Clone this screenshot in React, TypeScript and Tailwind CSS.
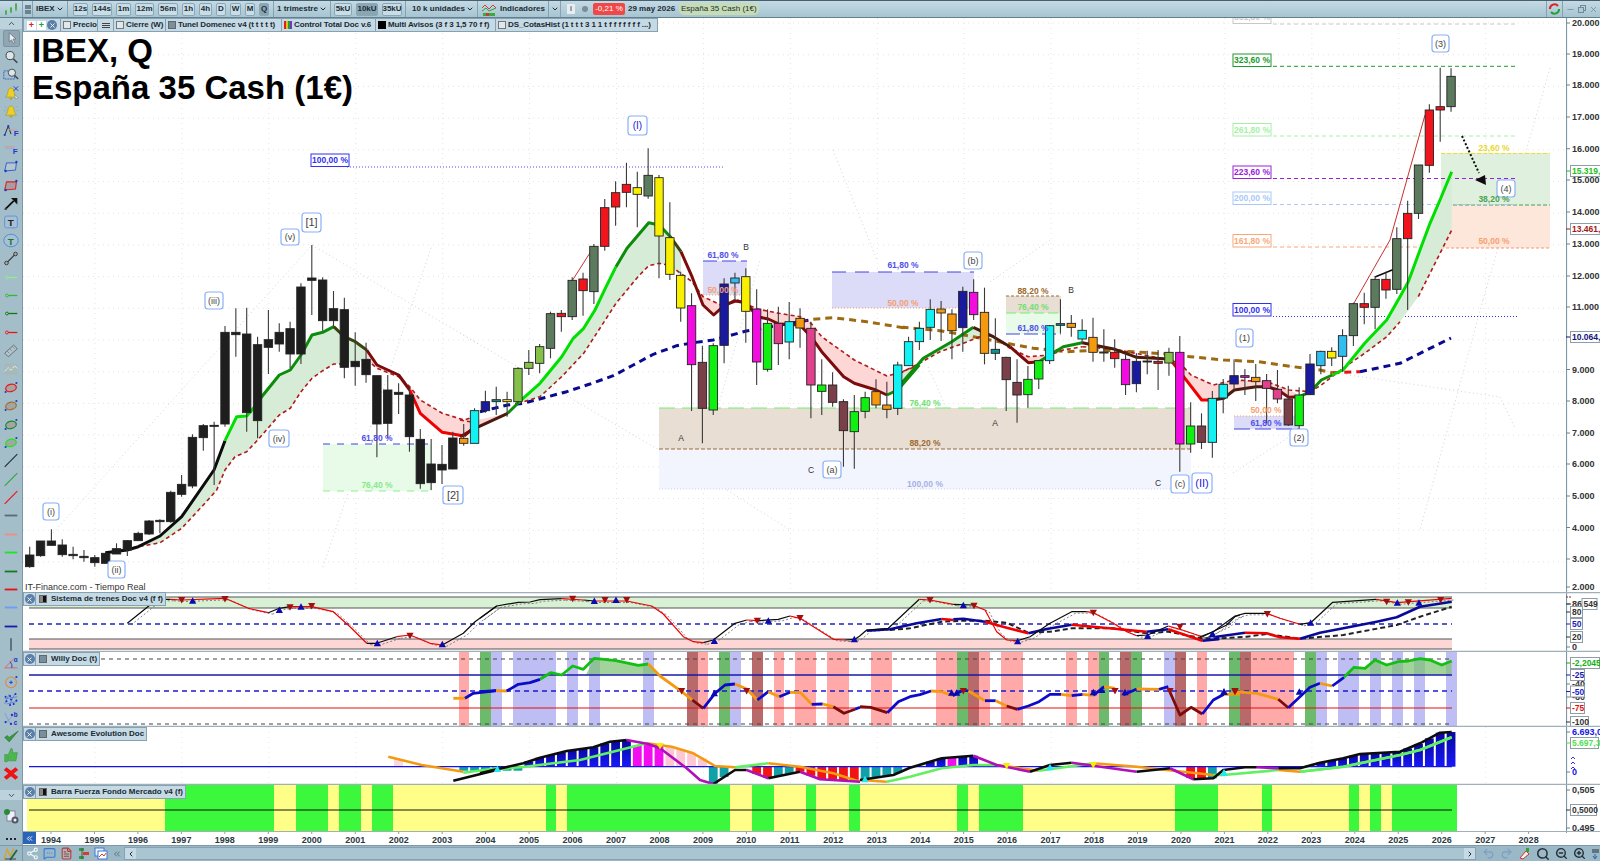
import React from "react";
import { Share2, MessageSquareMore, FileText, Undo2, Redo2, ZoomIn, ZoomOut, Search, ChevronDown, ChevronUp, ChevronLeft, ChevronRight, ChevronsLeft, Minus, X } from "lucide-react";

type Pt = number[];
const Z3 = [1200, 0], Z4 = [0, 580], Z5 = [1200, 580], Z8 = [20, 200], Z9 = [460, 120], Z10 = [900, 240], Z11 = [480, 590], Z12 = [860, 590];
const R = (o: number[], a: number[]): Pt[] => {
  const r: Pt[] = [];
  for (let i = 0; i < a.length; i += 2) r.push([o[0] + a[i] / 3, o[1] + a[i + 1] / 3]);
  return r;
};
const S = (p: Pt[]) => p.map((q) => q[0].toFixed(1) + "," + q[1].toFixed(1)).join(" ");
const L = ({ p, c, w = 1, d }: { p: Pt[]; c: string; w?: number; d?: string }) => (
  <polyline points={S(p)} fill="none" stroke={c} strokeWidth={w} strokeDasharray={d} strokeLinejoin="round" />
);
const Band = ({ a, b, c }: { a: Pt[]; b: Pt[]; c: string }) => <polygon points={S([...a, ...b])} fill={c} />;

const COL: Record<string, string> = {
  k: "#1e1e1e", G: "#5c7a5e", r: "#f2141c", y: "#f8f000", c: "#12f2f2", b: "#1a1a9e", m: "#f20ce0", B: "#7a3f48",
  g: "#10f010", o: "#f5990f", p: "#e0408c", l: "#84c04a", s: "#30bdf0", t: "#109090",
};
type C = [string, number, number, number, number];
const c8: C[] = [
  ["k",1065,1100,1040,1103],["k",1023,1067,1023,1070],["k",1023,1036,988,1036],["k",1035,1064,1018,1070],["k",1063,1067,1040,1078],
  ["k",1069,1073,1050,1085],["k",1073,1088,1065,1100],["k",1060,1090,1058,1090],["k",1046,1062,1030,1062],["k",1022,1050,1020,1068],
  ["k",1000,1022,995,1022],["k",963,1002,960,1005],["k",961,965,958,1000],["k",877,965,872,968],["k",853,883,825,890],
  ["k",712,858,703,865],["k",677,713,672,752],["k",676,679,665,855],["k",397,672,378,680],["k",397,404,325,470],
  ["k",402,638,323,695],["k",434,662,410,715],["k",419,442,330,522],["k",397,432,370,455],["k",386,462,365,505],
  ["k",261,462,250,492],["k",234,241,135,345],["k",240,362,232,392],["k",326,362,273,380],["k",329,502,293,535],
  ["k",484,500,397,557],["k",478,524,428,548],["k",527,672,527,772],["k",570,670,525,715],["k",577,583,550,642],
  ["k",585,710,563,755],["k",718,851,687,866],["k",792,848,717,870],["k",793,810,735,852],["k",714,807,695,808],
];
const c9: C[] = [
  ["o",955,970,912,977],["c",872,970,865,970],["b",845,872,812,878],["t",839,845,800,885],["y",839,845,815,890],
  ["l",745,845,742,850],["l",727,745,690,765],["l",680,730,672,760],["G",581,685,575,715],["r",580,590,570,635],
  ["G",481,590,472,600],["r",477,512,458,587],["G",379,515,372,552],["r",263,379,237,392],["r",218,261,184,317],
  ["r",193,217,128,262],["y",203,223,155,322],["G",166,228,85,236],["y",173,348,165,475],["y",353,463,247,480],
  ["y",466,564,455,605],["m",557,734,520,873],["B",727,865,677,970],["g",677,870,670,885],["b",492,676,475,730],
  ["s",474,489,458,540],["y",470,574,445,668],["m",567,726,508,795],["g",610,748,568,755],["p",610,671,560,735],
  ["c",605,666,546,718],["o",595,624,565,683],["p",625,795,605,895],["g",795,814,718,885],["B",795,847,757,860],
  ["B",845,932,838,1040],["g",875,935,825,1046],["g",833,874,815,895],["o",815,855,778,865],["o",855,868,785,895],
  ["c",735,865,725,885],["c",665,737,650,737],["c",625,665,605,690],
];
const c10: C[] = [
  ["c",208,262,178,300],["o",207,219,183,303],["o",222,272,208,358],["b",154,263,140,335],["m",157,224,118,240],
  ["o",217,340,143,373],["t",328,340,235,360],["B",352,419,350,513],["B",427,465,358,548],["g",418,464,378,503],
  ["g",362,417,362,447],["c",257,362,255,372],["t",251,256,178,280],["o",250,262,225,290],["c",271,297,238,310],
  ["o",292,337,233,365],["o",336,339,268,365],["r",337,356,298,383],["m",358,434,340,465],["b",364,431,340,457],
  ["k",363,365,332,403],["r",364,370,330,450],["l",337,369,323,407],["m",337,612,288,695],["g",558,612,487,638],
  ["B",558,607,520,627],["c",475,607,453,653],["c",433,474,417,520],["b",407,432,358,450],["m",407,412,387,465],
  ["o",412,425,372,483],["p",422,445,402,550],["p",448,477,390,490],["B",477,555,437,558],["g",465,557,442,570],
  ["b",372,464,342,465],["s",334,377,332,403],["y",334,354,322,378],["s",287,349,268,395],["G",191,287,188,318],
  ["r",191,202,158,253],["G",118,202,108,268],["r",118,150,95,176],
];
const c3: C[] = [
  ["G",716,868,682,882],["r",640,716,602,930],["G",495,640,495,657],["r",330,496,313,518],["r",320,330,203,425],["G",229,320,205,335],
];
const cx = (i: number) => 29.7 + 10.85 * i;
const candles = [
  ...c8.map((c) => ({ k: c[0], t: 200 + c[1] / 3, b: 200 + c[2] / 3, h: 200 + c[3] / 3, l: 200 + c[4] / 3 })),
  ...c9.map((c) => ({ k: c[0], t: 120 + c[1] / 3, b: 120 + c[2] / 3, h: 120 + c[3] / 3, l: 120 + c[4] / 3 })),
  ...c10.map((c) => ({ k: c[0], t: 240 + c[1] / 3, b: 240 + c[2] / 3, h: 240 + c[3] / 3, l: 240 + c[4] / 3 })),
  ...c3.map((c) => ({ k: c[0], t: c[1] / 3, b: c[2] / 3, h: c[3] / 3, l: c[4] / 3 })),
];

const BLK = "#0c0c0c", LIM = "#00e000", GRN = "#0b8c0b", OLV = "#3c4212", DRD = "#7c0c0c", RED = "#f00000", DBR = "#4c1a0c";
const thick: [string, Pt[]][] = [
  [BLK, R(Z8, [256,1058,322,1050,355,1040,420,1008,485,950,582,810,615,722])],
  [LIM, R(Z8, [615,722,650,650,680,648,713,610])],
  [GRN, R(Z8, [713,610,725,590,778,525,811,510,843,465,876,405,908,397,941,380])],
  [OLV, R(Z8, [941,380,973,410,1006,425,1040,450])],
  [DRD, R(Z8, [1040,450,1071,495,1136,525,1169,570])],
  [RED, R(Z8, [1169,570,1201,640,1267,697,1332,708])],
  [DRD, R(Z8, [1332,708,1365,680])],
  [DRD, R(Z9, [0,950,45,925])],
  [DBR, R(Z9, [45,925,143,880])],
  [GRN, R(Z9, [143,880,175,848])],
  [LIM, R(Z9, [175,848,240,790,305,710,340,655,371,625,405,570,436,505,468,440])],
  [GRN, R(Z9, [468,440,501,385,566,308,598,315,631,350])],
  [OLV, R(Z9, [631,350,663,395])],
  [DRD, R(Z9, [663,395,696,470,729,555,761,585,794,555,826,543,859,548,892,590,925,597,957,612,1020,615,1053,650,1085,695,1118,733,1151,770,1183,790,1248,810,1281,825])],
  [GRN, R(Z9, [1281,825,1313,810,1378,735])],
  [GRN, R(Z10, [0,435,70,355,155,305,220,262])],
  [DBR, R(Z10, [220,262,280,290,330,320])],
  [DRD, R(Z10, [330,320,385,368,417,365])],
  [GRN, R(Z10, [417,365,449,345,490,320,547,308])],
  [DBR, R(Z10, [547,308,580,315,645,328,710,352,808,357])],
  [RED, R(Z10, [808,357,820,370,905,480,938,480])],
  [DBR, R(Z10, [938,480,971,475,1003,450,1069,440,1101,440])],
  [DRD, R(Z10, [1101,440,1134,450,1166,472,1199,470])],
  [GRN, R(Z10, [1199,470,1231,455,1264,420,1297,405])],
  [LIM, [...R(Z10, [1297,405,1329,390,1394,310,1460,240,1500,170]), ...R(Z3, [625,845,660,750,690,670,720,600,755,515])]],
];
const dashed: Pt[][] = [
  R(Z8, [256,1060,355,1040,420,1028,485,985,550,915,590,870,615,810,645,770,680,755,713,720,778,645,811,625,843,575,876,535,908,512,941,492,973,492]),
  R(Z8, [1040,478,1071,505,1136,530,1169,560,1201,600,1267,640,1332,660,1365,650]),
  R(Z9, [0,900,30,905]),
  R(Z9, [143,880,175,850,240,830,305,770,371,700,436,600,468,550,534,470,566,437,598,430,631,437,696,485,729,530,794,560,826,537,892,567,957,580,1020,590,1053,610,1085,650,1183,720,1281,768,1313,760,1378,735]),
  R(Z10, [0,400,58,370,120,335,190,310,253,285,280,290,330,325,385,350,449,345,490,330,547,320]),
  R(Z10, [547,320,645,328,808,360,840,370,873,405,940,435,1003,420,1101,425,1166,450,1231,455,1264,435,1329,385,1394,340,1460,290,1500,245]),
  R(Z3, [655,890,700,800,755,690]),
];
const greenFill = "#d7ecd7", pinkFill = "#fdd6d6";

const gridY = Array.from({ length: 18 }, (_, i) => 23 + i * 31.7);
const gridX = Array.from({ length: 18 }, (_, i) => 95 + i * 86.92);

const diag: number[][] = [
  [53,533,312,245],[312,245,480,345],[460,333,727,490],[323,567,432,245],[833,150,877,260],[1550,68,1483,300],[1483,300,1420,530],
  [1267,363,1500,397],[1500,397,1515,428],[928,367,973,467],[990,282,1050,240],[1233,473,1300,430],[727,490,790,530],[700,470,760,260],
];

const FF = "'Liberation Sans', Arial, sans-serif";

const Wave = ({ a, t, c = "#444", s = 9 }: { a: number[]; t: string; c?: string; s?: number }) => (
  <g>
    <rect x={a[0]} y={a[2]} width={a[1] - a[0]} height={a[3] - a[2]} rx={3} fill="#fff" stroke="#8ab0f8" strokeWidth={1.2} />
    <text x={(a[0] + a[1]) / 2} y={(a[2] + a[3]) / 2 + s * 0.36} textAnchor="middle" fontSize={s} fill={c} fontFamily={FF}>{t}</text>
  </g>
);
const FBox = ({ y, t, c, x = 1233 }: { y: number; t: string; c: string; x?: number }) => (
  <g>
    <rect x={x} y={y} width={38} height={12.5} fill="#fff" stroke={c} strokeWidth={1} />
    <text x={x + 19} y={y + 9.3} textAnchor="middle" fontSize={8.5} fontWeight={700} fill={c} fontFamily={FF}>{t}</text>
  </g>
);
const Pct = ({ x, y, t, c }: { x: number; y: number; t: string; c: string }) => (
  <text x={x} y={y + 3} textAnchor="middle" fontSize={8.5} fontWeight={700} fill={c} fontFamily={FF}>{t}</text>
);
const Ltr = ({ x, y, t }: { x: number; y: number; t: string }) => (
  <text x={x} y={y + 3} textAnchor="middle" fontSize={8.5} fill="#333" fontFamily={FF}>{t}</text>
);
const Tri = ({ x, y, c, up }: { x: number; y: number; c: string; up?: boolean }) => (
  <polygon points={up ? `${x - 3.6},${y + 3} ${x + 3.6},${y + 3} ${x},${y - 3.5}` : `${x - 3.6},${y - 3} ${x + 3.6},${y - 3} ${x},${y + 3.5}`} fill={c} />
);
const Tris = ({ o, a, c, up }: { o: number[]; a: number[]; c: string; up?: boolean }) => (
  <>{R(o, a).map((p, i) => <Tri key={i} x={p[0]} y={p[1]} c={c} up={up} />)}</>
);

const AxT = ({ y, t, c = "#333" }: { y: number; t: string; c?: string }) => (
  <g>
    <line x1={1566} x2={1570} y1={y} y2={y} stroke="#6a8494" />
    <text x={1572} y={y + 3.2} fontSize={9} fontWeight={700} fill={c} fontFamily={FF}>{t}</text>
  </g>
);
const AxB = ({ y, t, c = "#333", w = 32, x = 1570.5 }: { y: number; t: string; c?: string; w?: number; x?: number }) => (
  <g>
    <line x1={1566} x2={1571} y1={y} y2={y} stroke={c} />
    <rect x={x} y={y - 5.5} width={w} height={11} fill="#fff" stroke="#8d9ea8" />
    <text x={x + 1.5} y={y + 3.2} fontSize={8.5} fontWeight={700} fill={c} fontFamily={FF}>{t}</text>
  </g>
);

function PanelSvgs({ top, h, plot, axis }: { top: number; h: number; plot: React.ReactNode; axis: React.ReactNode }) {
  return (
    <>
      <svg className="block w-[1543px] shrink-0" height={h} viewBox={`23 ${top} 1543 ${h}`}>
        <rect x={23} y={top} width={1543} height={h} fill="#fff" />
        {plot}
      </svg>
      <svg className="block w-[34px] shrink-0" height={h} viewBox={`1566 ${top} 34 ${h}`}>
        <rect x={1566} y={top} width={34} height={h} fill="#fff" />
        <line x1={1566.5} x2={1566.5} y1={top} y2={top + h} stroke="#7f98a6" strokeWidth={1.2} />
        {axis}
      </svg>
    </>
  );
}

const MainPlot = () => (
  <>
    {gridY.map((y) => <line key={y} x1={23} x2={1566} y1={y} y2={y} stroke="#e4e4e4" strokeDasharray="1 4" />)}
    {gridX.map((x) => <line key={x} x1={x} x2={x} y1={18} y2={592} stroke="#e4e4e4" strokeDasharray="1 4" />)}
    {diag.map((d, i) => <line key={i} x1={d[0]} y1={d[1]} x2={d[2]} y2={d[3]} stroke="#d4d4d4" strokeDasharray="1 3" />)}

    {/* zones */}
    <rect x={323} y={444} width={109} height={47} fill="#e8fbe8" />
    <line x1={323} x2={432} y1={444} y2={444} stroke="#4040e8" strokeDasharray="7 7" />
    <line x1={323} x2={432} y1={491} y2={491} stroke="#8ef08e" strokeDasharray="7 7" strokeWidth={1.2} />
    <rect x={703} y={261} width={44} height={34} fill="#dcdcf8" />
    <line x1={703} x2={747} y1={261} y2={261} stroke="#4040e8" strokeDasharray="14 5" />
    <line x1={703} x2={747} y1={295} y2={295} stroke="#f5a060" strokeDasharray="1 2" />
    <rect x={832} y={272} width={142} height={36} fill="#dcdcf8" />
    <line x1={832} x2={974} y1={272} y2={272} stroke="#4040e8" strokeDasharray="14 9" />
    <line x1={832} x2={974} y1={308} y2={308} stroke="#f5a060" strokeDasharray="1 2" />
    <rect x={659} y={408} width={532} height={41} fill="#e9ded3" />
    <rect x={659} y={449} width={532} height={40} fill="#f2f5fe" />
    <line x1={659} x2={1191} y1={408} y2={408} stroke="#70f070" strokeDasharray="16 7" />
    <line x1={659} x2={1191} y1={449} y2={449} stroke="#9c6a30" strokeDasharray="4 2" strokeWidth={1.2} />
    <line x1={659} x2={1191} y1={489} y2={489} stroke="#ccd0f4" strokeDasharray="1 2" />
    <rect x={1006} y={296} width={55} height={17} fill="#e9ded3" />
    <rect x={1006} y={313} width={55} height={21} fill="#e8fbe8" />
    <line x1={1006} x2={1061} y1={296} y2={296} stroke="#9c6a30" strokeDasharray="3 2" />
    <line x1={1006} x2={1061} y1={313} y2={313} stroke="#70f070" strokeDasharray="10 4" />
    <line x1={1006} x2={1061} y1={334} y2={334} stroke="#4040e8" strokeDasharray="14 4" />
    <rect x={1234} y={416} width={66} height={13} fill="#dcdcf8" />
    <line x1={1234} x2={1300} y1={416} y2={416} stroke="#f5a060" strokeDasharray="1 2" />
    <line x1={1234} x2={1300} y1={429} y2={429} stroke="#4040e8" strokeDasharray="16 5" />
    <rect x={1441} y={153} width={109} height={52} fill="#dff0df" />
    <rect x={1441} y={205} width={109} height={43} fill="#fde6da" />
    <line x1={1441} x2={1550} y1={153.5} y2={153.5} stroke="#f0e020" strokeDasharray="4 2" />
    <line x1={1441} x2={1550} y1={205} y2={205} stroke="#4aa050" strokeDasharray="4 2" />
    <line x1={1441} x2={1550} y1={248} y2={248} stroke="#f59a70" strokeDasharray="3 2" />

    {/* fibo lines */}
    <line x1={347} x2={725} y1={167} y2={167} stroke="#5050e8" strokeDasharray="1 2" />
    <line x1={1273} x2={1517} y1={24} y2={24} stroke="#c8c8c8" strokeDasharray="4 3" />
    <line x1={1273} x2={1517} y1={66.3} y2={66.3} stroke="#1a9a2a" strokeDasharray="4 3" />
    <line x1={1273} x2={1517} y1={136} y2={136} stroke="#a6f0a6" strokeDasharray="4 3" />
    <line x1={1273} x2={1517} y1={178.5} y2={178.5} stroke="#9a20d8" strokeDasharray="4 3" />
    <line x1={1273} x2={1517} y1={204.5} y2={204.5} stroke="#a8c8f8" strokeDasharray="4 3" />
    <line x1={1273} x2={1441} y1={247} y2={247} stroke="#f8a878" strokeDasharray="4 3" />
    <line x1={1273} x2={1517} y1={316.5} y2={316.5} stroke="#3030f0" strokeDasharray="1 2" />

    {/* bands */}
    <Band a={R(Z8, [256,1058,355,1040,420,1008,485,950,582,810,615,722,650,650,680,648,713,610,778,525,811,510,843,465,876,405,908,397,941,380,973,410,1006,425,1040,450])} b={R(Z8, [1040,478,973,492,941,492,908,512,876,535,843,575,811,625,778,645,713,720,680,755,645,770,615,810,590,870,550,915,485,985,420,1028,355,1040])} c={greenFill} />
    <Band a={R(Z8, [1040,450,1071,495,1136,525,1169,570,1201,640,1267,697,1332,708,1365,680])} b={R(Z8, [1365,650,1332,660,1267,640,1201,600,1169,560,1136,530,1071,505,1040,478])} c={pinkFill} />
    <Band a={R(Z9, [0,950,45,925,143,880])} b={R(Z9, [143,880,30,905,0,900])} c={pinkFill} />
    <Band a={R(Z9, [143,880,175,848,240,790,305,710,340,655,371,625,405,570,436,505,468,440,501,385,566,308,598,315,631,350,663,395])} b={R(Z9, [663,470,631,437,598,430,566,437,534,470,468,550,436,600,371,700,305,770,240,830,175,850])} c={greenFill} />
    <Band a={R(Z9, [696,470,729,555,761,585,794,555,826,543,859,548,892,590,925,597,957,612,1020,615,1053,650,1085,695,1118,733,1151,770,1183,790,1248,810,1281,825,1313,810])} b={R(Z9, [1313,760,1281,768,1183,720,1085,650,1053,610,1020,590,957,580,892,567,826,537,794,560,729,530,696,485])} c={pinkFill} />
    <Band a={R(Z10, [0,435,70,355,155,305,220,262,280,290])} b={R(Z10, [280,290,253,285,190,310,120,335,58,370,0,400])} c={greenFill} />
    <Band a={R(Z10, [280,290,330,320,385,368,417,365,449,345])} b={R(Z10, [449,345,385,350,330,325])} c={pinkFill} />
    <Band a={R(Z10, [808,357,820,370,905,480,938,480,971,475,1003,450,1069,440,1101,440,1166,472,1199,470])} b={R(Z10, [1199,465,1166,450,1101,425,1003,420,940,435,873,405,840,370])} c={pinkFill} />
    <Band a={[...R(Z10, [1297,405,1329,390,1394,310,1460,240,1500,170]), ...R(Z3, [625,845,660,750,690,670,720,600,755,515])]} b={[...R(Z3, [755,690,700,800,655,890]), ...R(Z10, [1500,245,1460,290,1394,340,1329,385])]} c={greenFill} />

    {/* long MA */}
    <L p={[...R(Z9, [60,875,143,855,190,850,253,833,320,815,390,792,460,767,520,735,580,703,650,677,700,668,760,660,859,633,1060,598])]} c="#0a0a90" w={3} d="7 5" />
    <L p={[...R(Z9, [1060,598,1120,593,1220,605,1340,625]), ...R(Z10, [10,262,120,272,220,290,320,310,400,325,500,335,600,330,700,335,800,342,870,350,970,360,1075,365,1180,380,1260,390,1297,398])]} c="#9c6a10" w={3} d="7 5" />
    <L p={R(Z10, [1297,398,1380,395])} c="#e81010" w={3} d="7 5" />
    <L p={[...R(Z10, [1380,395,1430,385,1500,370]), [1451, 338]]} c="#0a0a90" w={3} d="7 5" />

    {dashed.map((p, i) => <L key={i} p={p} c="#b01a1a" w={1.6} d="4 3" />)}
    {thick.map((t, i) => <L key={i} p={t[1]} c={t[0]} w={3} />)}

    {/* thin trend lines */}
    <L p={R(Z9, [338,480,403,378])} c="#c83030" />
    <L p={[[1354, 303], [1390, 240], [1425, 115]]} c="#c83030" />
    <L p={[[1375, 277], [1397, 268]]} c="#0c0c0c" w={1.5} />
    <L p={[[1462, 136], [1479, 173]]} c="#0c0c0c" w={2} d="2 2" />
    <polygon points="1475,180 1485,175 1486,185" fill="#0c0c0c" />

    {/* candles */}
    {candles.map((c, i) => (
      <g key={i}>
        <line x1={cx(i)} x2={cx(i)} y1={c.h} y2={c.l} stroke="#3a3a3a" strokeWidth={1.1} />
        <rect x={cx(i) - 4.2} y={c.t} width={8.4} height={Math.max(c.b - c.t, 1)} fill={COL[c.k]} stroke="#222" strokeWidth={0.9} />
      </g>
    ))}

    {/* labels */}
    <Wave a={[43,59,503,520]} t="(i)" />
    <Wave a={[108,125,561,578]} t="(ii)" />
    <Wave a={[205,223,292,309]} t="(iii)" />
    <Wave a={[269,289,430,447]} t="(iv)" />
    <Wave a={[281,299,229,245]} t="(v)" />
    <Wave a={[302,321,213,232]} t="[1]" s={11} />
    <Wave a={[443,463,486,504]} t="[2]" s={11} />
    <Wave a={[628,647,116,135]} t="(I)" c="#2020d8" s={10} />
    <Wave a={[823,841,461,478]} t="(a)" />
    <Wave a={[964,982,252,269]} t="(b)" />
    <Wave a={[1171,1189,475,493]} t="(c)" />
    <Wave a={[1192,1212,473,493]} t="(II)" c="#2020d8" s={11} />
    <Wave a={[1236,1253,329,347]} t="(1)" />
    <Wave a={[1290,1308,429,446]} t="(2)" />
    <Wave a={[1432,1449,35,52]} t="(3)" />
    <Wave a={[1497,1515,180,197]} t="(4)" />
    <Ltr x={681} y={438} t="A" /><Ltr x={746} y={247} t="B" /><Ltr x={811} y={470} t="C" />
    <Ltr x={995} y={423} t="A" /><Ltr x={1071} y={290} t="B" /><Ltr x={1158} y={483} t="C" />

    <Pct x={377} y={438} t="61,80 %" c="#5050e8" /><Pct x={377} y={485} t="76,40 %" c="#88e888" />
    <Pct x={723} y={255} t="61,80 %" c="#5050e8" /><Pct x={723} y={290} t="50,00 %" c="#f5a070" />
    <Pct x={903} y={265} t="61,80 %" c="#5050e8" /><Pct x={903} y={303} t="50,00 %" c="#f5a070" />
    <Pct x={925} y={403} t="76,40 %" c="#70e070" /><Pct x={925} y={443} t="88,20 %" c="#9c6a30" /><Pct x={925} y={484} t="100,00 %" c="#a8b0e8" />
    <Pct x={1033} y={291} t="88,20 %" c="#9c6a30" /><Pct x={1033} y={307} t="76,40 %" c="#70e070" /><Pct x={1033} y={328} t="61,80 %" c="#5050e8" />
    <Pct x={1266} y={410} t="50,00 %" c="#f5a070" /><Pct x={1266} y={423} t="61,80 %" c="#5050e8" />
    <Pct x={1494} y={148} t="23,60 %" c="#e8d830" /><Pct x={1494} y={199} t="38,20 %" c="#4aa050" /><Pct x={1494} y={241} t="50,00 %" c="#f5a070" />

    <FBox x={311} y={154} t="100,00 %" c="#3030f0" />
    <FBox y={11} t="351,80 %" c="#c8c8c8" />
    <FBox y={54} t="323,60 %" c="#1a9a2a" />
    <FBox y={123.5} t="261,80 %" c="#a6f0a6" />
    <FBox y={166} t="223,60 %" c="#9a20d8" />
    <FBox y={192} t="200,00 %" c="#a8c8f8" />
    <FBox y={234.5} t="161,80 %" c="#f8a878" />
    <FBox y={303.5} t="100,00 %" c="#3030f0" />

    <text x={25} y={590} fontSize={9} fill="#333" fontFamily={FF}>IT-Finance.com - Tiempo Real</text>
  </>
);

const MainAxis = () => (
  <>
    {[["20.000",23],["19.000",54],["18.000",85],["17.000",117],["16.000",148.7],["15.000",180],["14.000",212],["13.000",244],["12.000",276],["11.000",307],["9.000",369.5],["8.000",401],["7.000",433],["6.000",464],["5.000",496],["4.000",527.5],["3.000",559],["2.000",587]].map(([t, y]) => <AxT key={t as string} y={y as number} t={t as string} />)}
    <AxB y={171} t="15.319,0" c="#22c022" w={34} />
    <AxB y={229} t="13.461,6" c="#a01818" w={34} />
    <AxB y={337} t="10.064,2" c="#14147a" w={34} />
  </>
);

const tSys: [string, Pt[]][] = [
  [BLK, R(Z4, [382,130,450,75,490,58,510,58])],
  [BLK, R(Z11, [0,85,50,48,115,37,150,36,180,29,245,26])],
  [RED, R(Z11, [245,26,310,30])],
  [BLK, R(Z11, [310,30,345,33])],
  [RED, R(Z11, [345,33,440,33,515,48,550,72,610,140,640,155,670,158])],
  [BLK, R(Z11, [670,158,700,150,765,100,800,90])],
  [RED, R(Z11, [800,90,835,92])],
  [BLK, R(Z11, [835,92,895,88,930,78])],
  [RED, R(Z11, [930,78,960,85,1060,148,1095,150])],
  [BLK, R(Z11, [1095,150,1125,148,1140,137])],
  [BLK, R(Z12, [0,137,20,120,85,115,178,28])],
  [RED, R(Z12, [178,28,210,30,280,43])],
  [BLK, R(Z12, [280,43,342,45])],
  [RED, R(Z12, [342,47,375,60,410,125,440,150,472,152])],
  [BLK, R(Z12, [472,152,510,140,570,100,635,65,680,65])],
  [RED, R(Z12, [680,65,700,68,760,100,800,125,830,137])],
  [BLK, R(Z12, [830,137,863,135,925,108])],
  [RED, R(Z12, [925,108,960,118,1027,140])],
  [BLK, R(Z12, [1027,140,1100,105,1125,80,1140,75])],
  [RED, R(Z4, [510,58,545,60,675,55,745,85,805,98])],
  [BLK, R(Z4, [805,98,838,85,870,80])],
  [RED, R(Z4, [870,80,935,80,1000,95,1050,140,1100,190])],
  [BLK, R(Z4, [1100,190,1130,190,1190,170])],
  [RED, R(Z4, [1190,170,1230,165,1290,190,1327,195])],
  [BLK, R(Z4, [1327,195,1390,160,1425,125,1490,78])],
  [BLK, R(Z5, [0,170,40,155,105,108,135,100,200,100])],
  [RED, R(Z5, [200,100,240,115,300,133])],
  [BLK, R(Z5, [300,133,332,128,398,67,528,58])],
  [RED, R(Z5, [528,58,592,68,755,55])],
];
const tSysThick: [string, Pt[]][] = [
  [ "#0a0a9a", R(Z12, [20,122,90,118,170,100,245,87])],
  [RED, R(Z12, [245,87,280,90])],
  ["#0a0a9a", R(Z12, [280,88,310,86,375,95])],
  [RED, R(Z12, [375,95,440,113,505,130])],
  ["#0a0a9a", R(Z12, [505,130,560,117,635,104])],
  [RED, R(Z12, [635,104,700,110,860,125])],
  ["#0a0a9a", R(Z12, [860,125,925,118])],
  [RED, R(Z12, [925,118,1027,152])],
  ["#0a0a9a", [...R(Z12, [1027,152,1075,148]), ...R(Z5, [50,170,135,158])]],
  [RED, R(Z5, [135,158,200,160,240,172,300,176])],
  ["#0a0a9a", R(Z5, [300,176,360,158,430,145,530,125,590,112,660,80,755,65])],
];
const SysPlot = () => (
  <>
    <rect x={29} y={597} width={1423} height={11} fill="#d8f0d4" />
    <rect x={29} y={639} width={1423} height={10} fill="#fdd6d6" />
    <line x1={29} x2={1452} y1={597} y2={597} stroke="#555" strokeWidth={1.2} />
    <line x1={29} x2={1452} y1={608} y2={608} stroke="#555" strokeWidth={1.2} />
    <line x1={29} x2={1452} y1={624} y2={624} stroke="#2020c0" strokeDasharray="5 4" strokeWidth={1.3} />
    <line x1={29} x2={1452} y1={639} y2={639} stroke="#555" strokeWidth={1.2} />
    <line x1={29} x2={1452} y1={649} y2={649} stroke="#555" strokeWidth={1.2} />
    {tSys.map((t, i) => <L key={"d" + i} p={t[1].map((q) => [q[0] + 4, q[1] + 1.5])} c="#666" w={0.8} d="2 2" />)}
    <L p={[...R(Z12, [90,120,150,115,245,95,310,92,375,92,440,98,505,128,570,125,635,115,760,115,860,130,925,125,1027,145]), ...R(Z5, [60,175,140,170,200,162,300,176,430,165,590,135,660,110,755,80])]} c="#222" w={2} d="5 3" />
    {tSysThick.map((t, i) => <L key={i} p={t[1]} c={t[0]} w={2.6} />)}
    {tSys.map((t, i) => <L key={i} p={t[1]} c={t[0]} w={1.2} />)}
    <Tris o={Z4} a={[545,60,675,57,870,82,935,78,1230,167]} c="#a01010" />
    <Tris o={Z4} a={[578,62,838,90,903,80,1132,190,1327,193]} c="#0a0ab0" up />
    <Tris o={Z11} a={[278,26,375,30,440,30,832,92,960,84]} c="#a01010" />
    <Tris o={Z11} a={[343,33,408,30,703,153,865,92,1123,148]} c="#0a0ab0" up />
    <Tris o={Z12} a={[210,30,342,47,700,68,960,110]} c="#a01010" />
    <Tris o={Z12} a={[310,46,473,154,863,138,1057,133]} c="#0a0ab0" up />
    <Tris o={Z5} a={[202,102,560,65,625,67,722,60]} c="#a01010" />
    <Tris o={Z5} a={[38,163,332,128,592,68,657,68]} c="#0a0ab0" up />
    <line x1={23} x2={1566} y1={651.5} y2={651.5} stroke="#9fb0ba" strokeWidth={1.4} />
    <line x1={23} x2={1566} y1={592.5} y2={592.5} stroke="#9fb0ba" strokeWidth={1.4} />
  </>
);
const SysAxis = () => (
  <>
    <line x1={1566} x2={1571} y1={597} y2={597} stroke="#a02020" strokeDasharray="2 1" />
    <AxT y={604} t="86" />
    <AxB y={604} t="549" w={15} x={1582} />
    <AxB y={612} t="80" w={12} />
    <AxB y={624} t="50" c="#2020c0" w={12} />
    <AxB y={637} t="20" w={12} />
    <AxT y={647} t="0" />
    <line x1={1566} x2={1600} y1={651.5} y2={651.5} stroke="#9fb0ba" strokeWidth={1.4} />
    <line x1={1566} x2={1600} y1={592.5} y2={592.5} stroke="#9fb0ba" strokeWidth={1.4} />
  </>
);

const PK = "#ffa9a9", DG = "#6cbb6c", LV = "#bebef5", DK = "#b86a6a";
const wBars: [number, number, string][] = [
  [459,469,PK],[480,491,DG],[491,502,LV],[513,556,LV],[567,578,LV],[589,600,LV],[643,654,LV],[687,698,DK],[698,708,PK],[719,730,DG],[730,741,LV],[752,763,DK],[774,784,PK],[795,816,PK],[827,849,PK],
  [871,892,PK],[936,957,PK],[957,968,DG],[968,979,DK],[979,990,PK],[1001,1023,PK],[1066,1077,PK],[1088,1099,PK],[1099,1109,DG],[1120,1131,DK],[1131,1142,DG],[1164,1175,LV],[1175,1186,DK],[1197,1207,PK],
  [1229,1240,DG],[1240,1251,DK],[1251,1294,PK],[1305,1316,DG],[1316,1327,LV],[1338,1359,LV],[1370,1381,LV],[1392,1403,LV],[1414,1425,LV],[1446,1457,LV],
];
const NV = "#0c0cc8", OR = "#f59a10", GL = "#12c012";
const wSeg: [string, Pt[]][] = [
  [OR, R(Z4, [1360,355,1395,355])],
  [NV, R(Z4, [1395,355,1420,340,1490,332])],
  [NV, R(Z11, [0,305,48,302])],[OR, R(Z11, [48,302,80,303])],[NV, R(Z11, [80,303,115,283,150,278,180,268])],
  [GL, R(Z11, [180,268,212,248,245,255,278,228,310,238,343,205,408,212,475,226,505,222])],
  [OR, R(Z11, [505,222,540,258,605,305,637,330])],[DRD, R(Z11, [637,330,670,355])],
  [NV, R(Z11, [670,355,705,310,735,285,765,282])],[OR, R(Z11, [765,282,800,297,832,330])],[NV, R(Z11, [832,330,865,305])],
  [OR, R(Z11, [865,305,898,320])],[NV, R(Z11, [898,320,930,307])],[OR, R(Z11, [930,307,962,308,995,343])],[NV, R(Z11, [995,343,1028,342])],
  [OR, R(Z11, [1028,342,1060,350])],[DRD, R(Z11, [1060,350,1092,370,1125,358])],[NV, R(Z11, [1125,358,1140,352])],
  [DRD, R(Z12, [0,350,32,352,82,368])],[NV, R(Z12, [82,368,115,335,150,320,180,314,213,303])],[OR, R(Z12, [213,303,245,305,278,317])],
  [NV, R(Z12, [278,317,310,300,325,303])],[OR, R(Z12, [325,303,375,332])],[NV, R(Z12, [375,332,407,332])],[OR, R(Z12, [407,332,440,348])],
  [DRD, R(Z12, [440,348,472,358])],[NV, R(Z12, [472,358,505,348,537,335,570,313,603,313])],[OR, R(Z12, [603,313,635,317])],[NV, R(Z12, [635,317,668,313])],
  [OR, R(Z12, [668,313,700,316])],[NV, R(Z12, [700,316,733,290])],[OR, R(Z12, [733,290,765,295])],[NV, R(Z12, [790,315,830,297])],[OR, R(Z12, [830,297,897,298])],
  [NV, R(Z12, [897,298,925,290])],[DRD, R(Z12, [925,295,960,375,993,352,1027,372])],[NV, R(Z12, [1027,372,1060,330,1092,313])],[OR, R(Z12, [1092,313,1140,312])],
  [OR, R(Z5, [105,335,170,340,235,358])],[DRD, R(Z5, [235,358,265,383])],[NV, R(Z5, [265,383,330,322,360,310])],[OR, R(Z5, [360,310,397,318])],[NV, R(Z5, [397,318,432,292])],
  [GL, R(Z5, [432,292,462,262,495,265,525,240,560,255,595,245,625,243,660,236,690,240,725,255,755,243])],
];
const WillyPlot = () => (
  <>
    {wBars.map((b, i) => <rect key={i} x={b[0]} y={652} width={b[1] - b[0]} height={75} fill={b[2]} />)}
    <polygon points={S([...R(Z11, [318,254,343,205,408,212,475,226,505,222,535,254])])} fill="#7ac070" opacity={0.7} />
    <polygon points={S([...R(Z5, [440,284,462,262,495,265,525,240,560,255,595,245,625,243,660,236,690,240,725,255,755,243,755,284])])} fill="#7ac070" opacity={0.7} />
    <line x1={29} x2={1452} y1={659} y2={659} stroke="#444" strokeDasharray="4 4" strokeWidth={1.1} />
    <line x1={29} x2={1452} y1={724} y2={724} stroke="#444" strokeDasharray="4 4" strokeWidth={1.1} />
    <line x1={29} x2={1452} y1={675} y2={675} stroke="#1a1aa8" strokeWidth={1.3} />
    <line x1={29} x2={1452} y1={691} y2={691} stroke="#1a1ad0" strokeDasharray="5 4" strokeWidth={1.3} />
    <line x1={29} x2={1452} y1={708} y2={708} stroke="#e01010" strokeWidth={1.2} />
    {wSeg.map((t, i) => <L key={i} p={t[1]} c={t[0]} w={2.8} />)}
    <Tris o={Z11} a={[605,303,800,303]} c="#a01010" />
    <Tris o={Z11} a={[703,310]} c="#0a0ab0" up />
    <Tris o={Z12} a={[310,303,765,303,930,303,1125,303]} c="#a01010" />
    <Tris o={Z12} a={[275,308,290,308,700,307,725,300,795,307,1092,305]} c="#0a0ab0" up />
    <Tris o={Z5} a={[105,335]} c="#a01010" />
    <Tris o={Z5} a={[72,335,298,335]} c="#0a0ab0" up />
    <line x1={23} x2={1566} y1={726.5} y2={726.5} stroke="#9fb0ba" strokeWidth={1.4} />
  </>
);
const WillyAxis = () => (
  <>
    <AxB y={663} t="-2,2045" c="#12b012" w={29} />
    <AxB y={675} t="-25" c="#1a1aa8" w={14} />
    <AxT y={684} t="-40" />
    <AxT y={697} t="-60" />
    <AxB y={691.5} t="-50" c="#1a1ad0" w={14} />
    <AxB y={708} t="-75" c="#e01010" w={14} />
    <AxB y={722} t="-100" w={18} />
    <line x1={1566} x2={1600} y1={726.5} y2={726.5} stroke="#9fb0ba" strokeWidth={1.4} />
  </>
);

const PUR = "#b010b8", GR2 = "#60f060";
const aSeg: [string, Pt[]][] = [
  [BLK, R(Z4, [1360,602,1490,570])],
  [BLK, R(Z11, [0,550,50,538,130,520,180,503,260,483,340,472,390,455,440,450])],
  [PUR, R(Z11, [440,450,505,462,540,475,620,535,660,570,700,582])],
  [BLK, R(Z11, [700,582,765,540,800,540])],
  [PUR, R(Z11, [800,540,865,565])],
  [BLK, R(Z11, [865,565,960,545])],
  [PUR, R(Z11, [960,545,1020,568,1140,575])],
  [BLK, R(Z12, [0,570,100,555,150,533,245,505,340,497])],
  [PUR, R(Z12, [340,497,410,525,510,545])],
  [BLK, R(Z12, [510,545,570,525,635,518])],
  [PUR, R(Z12, [635,518,700,527,830,545])],
  [BLK, R(Z12, [830,545,930,535])],
  [PUR, R(Z12, [930,535,1000,568])],
  [BLK, [...R(Z12, [1000,568,1060,565]), ...R(Z5, [70,570,135,562,170,562])]],
  [PUR, R(Z5, [170,562,235,565])],
  [BLK, R(Z5, [235,565,300,565,360,548,430,535,480,522,600,515,660,490,720,458,755,456])],
];
const bSeg: [string, Pt[]][] = [
  [OR, R(Z4, [1165,530,1265,555,1390,575])],
  [GR2, R(Z4, [1390,578,1490,565])],
  [GR2, R(Z11, [0,545,50,538,135,530,300,510,500,460])],
  [OR, R(Z11, [500,460,575,470,640,490,705,528,765,532])],
  [GR2, R(Z11, [765,532,865,520])],
  [OR, R(Z11, [865,520,960,530,1060,550,1140,575])],
  [OR, R(Z12, [0,570,80,575])],
  [GR2, R(Z12, [80,575,150,560,245,535,340,525,410,525])],
  [OR, R(Z12, [410,525,535,542])],
  [GR2, R(Z12, [535,542,700,520])],
  [OR, R(Z12, [700,520,830,530,1060,555])],
  [GR2, [...R(Z12, [1060,555]), ...R(Z5, [70,585,235,570])]],
  [OR, R(Z5, [235,570,300,575])],
  [GR2, R(Z5, [300,575,430,560,600,525,660,510,755,472])],
];
const lineAt = (segs: [string, Pt[]][], x: number) => {
  const pts = segs.flatMap((s) => s[1]).sort((a, b) => a[0] - b[0]);
  for (let i = 0; i < pts.length - 1; i++) {
    if (x >= pts[i][0] && x <= pts[i + 1][0]) {
      const d = pts[i + 1][0] - pts[i][0] || 1;
      return pts[i][1] + ((x - pts[i][0]) / d) * (pts[i + 1][1] - pts[i][1]);
    }
  }
  return 766.7;
};
const Z0 = 766.7;
const histo = candles.map((_, i) => {
  const x = cx(i);
  if (x < 455) return null;
  const a = lineAt(aSeg, x);
  const b = lineAt(bSeg.slice(1), x);
  if (x < 520) return { x, t: Z0, b: Z0 + 4, c: "#12a0a0" };
  if (x < 633) return { x, t: Math.min(a, Z0), b: Z0, c: "url(#blu)" };
  if (x < 667) return { x, t: b, b: Z0, c: "#f40cf0" };
  if (x < 712) return { x, t: b, b: Z0, c: "#fdc8d4" };
  if (x < 733) return { x, t: Z0, b: a, c: "#12a0a8" };
  if (x < 747) return null;
  if (x < 773) return { x, t: Z0, b: a, c: "#f01414" };
  if (x < 800) return { x, t: Z0, b: a, c: "#12a0a8" };
  if (x < 860) return { x, t: Z0, b: a, c: "#f01414" };
  if (x < 903) return { x, t: Z0, b: a, c: "#12a0a8" };
  if (x < 927) return { x, t: a, b: Z0, c: "#c8f4c8" };
  if (x < 980) return { x, t: a, b: Z0, c: x > 945 && x < 960 ? "#f40cf0" : "url(#blu)" };
  if (x > 1185 && x < 1207) return { x, t: Z0, b: a, c: "#f01414" };
  if (x >= 1207 && x < 1220) return { x, t: Z0, b: a, c: "#12a0a8" };
  if (x >= 1240) return { x, t: Math.min(a, Z0), b: Z0, c: "url(#blu)" };
  return null;
}).filter(Boolean) as { x: number; t: number; b: number; c: string }[];

const AwePlot = () => (
  <>
    <defs>
      <linearGradient id="blu" x1="0" y1="0" x2="0" y2="1">
        <stop offset="0" stopColor="#0808a0" />
        <stop offset="1" stopColor="#1818f8" />
      </linearGradient>
    </defs>
    {gridX.map((x) => <line key={x} x1={x} x2={x} y1={727} y2={785} stroke="#e8e8e8" strokeDasharray="1 4" />)}
    <rect x={394} y={759} width={9} height={8} fill="#fbd8e0" />
    {histo.map((h, i) => <rect key={i} x={h.x - 4.4} y={h.t} width={8.8} height={Math.max(h.b - h.t, 0.5)} fill={h.c} />)}
    <line x1={29} x2={1452} y1={766.7} y2={766.7} stroke="#1414e8" strokeWidth={1.3} />
    {bSeg.map((t, i) => <L key={i} p={t[1]} c={t[0]} w={2.6} />)}
    {aSeg.map((t, i) => <L key={i} p={t[1]} c={t[0]} w={2.6} />)}
    <L p={R(Z5, [300,575,430,560,600,525,660,510,755,472])} c={GR2} w={2.6} />
    <Tris o={Z11} a={[52,537]} c="#22e8f0" up />
    <Tris o={Z11} a={[540,468]} c="#f0f000" />
    <Tris o={Z12} a={[15,568,570,532,1092,548]} c="#22e8f0" up />
    <Tris o={Z12} a={[440,528,700,525]} c="#f0f000" />
    <Tris o={Z5} a={[72,578]} c="#22e8f0" up />
    <line x1={23} x2={1566} y1={784.5} y2={784.5} stroke="#9fb0ba" strokeWidth={1.4} />
  </>
);
const AweAxis = () => (
  <>
    <AxT y={732} t="6.693,0" c="#1414e8" />
    <AxB y={743} t="5.697,3" c="#50e050" w={28} />
    <path d="M1571 759l2 -2l2 2M1571 764l2 -2l2 2M1571 769l2 -2l2 2" fill="none" stroke="#3030e0" />
    <AxT y={772} t="0" c="#1414e8" />
    <line x1={1566} x2={1600} y1={784.5} y2={784.5} stroke="#9fb0ba" strokeWidth={1.4} />
  </>
);

const fBars: number[][] = [[165,274],[296,328],[339,361],[372,393],[546,556],[567,730],[752,774],[806,816],[849,860],[957,968],[979,1023],[1175,1218],[1262,1272],[1349,1359],[1370,1381],[1392,1457]];
const FuerzaPlot = () => (
  <>
    <rect x={27} y={785} width={1430} height={47} fill="#ffff88" />
    {fBars.map((b, i) => <rect key={i} x={b[0]} y={785} width={b[1] - b[0]} height={47} fill="#3cf83c" />)}
    <line x1={29} x2={1452} y1={810} y2={810} stroke="#111" strokeWidth={1} />
    <line x1={23} x2={1566} y1={831.5} y2={831.5} stroke="#9fb0ba" strokeWidth={1.2} />
  </>
);
const FuerzaAxis = () => (
  <>
    <AxT y={790} t="0,505" />
    <AxB y={810} t="0,5000" w={26} />
    <AxT y={828} t="0,495" />
    <line x1={1566} x2={1600} y1={831.5} y2={831.5} stroke="#9fb0ba" strokeWidth={1.2} />
  </>
);

const Close = () => (
  <span className="flex h-[10px] w-[10px] items-center justify-center rounded-full bg-[#5b7fa8] text-white">
    <X size={7} strokeWidth={3} />
  </span>
);
const Sw = ({ kind }: { kind: string }) => {
  if (kind === "bk") return <span className="flex h-[8px] w-[8px] shrink-0 border border-[#666] bg-[#111]"><span className="w-[3px] bg-[#888]" /></span>;
  if (kind === "gr") return <span className="h-[8px] w-[8px] shrink-0 border border-[#666] bg-[#78909c]" />;
  return <span className="h-[8px] w-[8px] shrink-0 border border-[#777] bg-[#dfe8ec]" />;
};
const PanelLegend = ({ t, kind, cls }: { t: string; kind: string; cls: string }) => (
  <div className="absolute left-0 top-0 flex h-[14px] items-stretch text-[8px] font-bold text-[#1a2a33]">
    <span className="flex w-[13px] items-center justify-center border border-[#86a1af] bg-[#c5dae4]"><Close /></span>
    <span className={"flex items-center gap-[4px] border border-l-0 border-[#86a1af] bg-[#c5dae4] pl-[3px] " + cls}>
      <Sw kind={kind} />
      <span className="whitespace-nowrap">{t}</span>
    </span>
  </div>
);

const LegItem = ({ children, cls }: { children: React.ReactNode; cls: string }) => (
  <span className={"flex items-center gap-[2px] overflow-hidden whitespace-nowrap border-r border-[#86a1af] pl-[2px] tracking-[-0.1px] " + cls}>{children}</span>
);

const TopBtn = ({ t, cls, on }: { t: string; cls: string; on?: boolean }) => (
  <span className={"flex h-[13px] items-center justify-center rounded-[2px] border border-[#8aa7b6] " + (on ? "bg-[#8ba6b3] " : "bg-[#c8dde6] ") + cls}>{t}</span>
);

const Logo = () => (
  <svg width="16" height="14" viewBox="0 0 16 14">
    <path d="M2 8v5M7 5v6M12 1v8" stroke="#2f9b2f" strokeWidth="1" />
    <rect x="1" y="9" width="2" height="3" fill="#4cb04c" /><rect x="6" y="6" width="2" height="4" fill="#4cb04c" /><rect x="11" y="2" width="2" height="5" fill="#4cb04c" />
  </svg>
);

const hl = (c: string, w = 2) => <line x1="3" x2="17" y1="9" y2="9" stroke={c} strokeWidth={w} />;
const hnd = (c: string) => <g><line x1="7" x2="17" y1="9" y2="9" stroke={c} strokeWidth="1.4" /><circle cx="5.5" cy="9" r="1.6" fill="none" stroke={c} /></g>;
const ell = (c: string) => <g><ellipse cx="10" cy="9.5" rx="6" ry="4" fill="#a5a5a5" stroke={c} strokeWidth="1.4" transform="rotate(-15 10 9.5)" /><circle cx="16" cy="4" r="1.2" fill="#1a3ac8" /><circle cx="4" cy="14" r="1.2" fill="#1a3ac8" /></g>;
const dg = (c: string) => <line x1="3" x2="17" y1="16" y2="2" stroke={c} strokeWidth="1.2" />;
const txt = (x: number, y: number, t: string, c: string, s = 7) => <text x={x} y={y} fontSize={s} fontWeight={700} fill={c} fontFamily={FF}>{t}</text>;
const bell = <path d="M10 3C6.5 3 7 7 6 10L4 13H16L14 10C13 7 13.5 3 10 3ZM8.5 14.5H11.5L10 16Z" fill="#ecd024" stroke="#a98a12" strokeWidth=".6" />;

const sideIcons: React.ReactNode[] = [
  <path d="M7 2V14L10 11.5L12.5 16L14.5 15L12 10.5H16Z" fill="#e8eef2" stroke="#556" strokeWidth=".8" />,
  <g><circle cx="9" cy="8" r="4.5" fill="#dbe6ec" stroke="#444" strokeWidth="1.1" /><line x1="12.5" y1="11.5" x2="17" y2="16" stroke="#444" strokeWidth="1.8" /></g>,
  <g><rect x="2" y="5" width="12" height="9" fill="none" stroke="#2a5ac8" strokeDasharray="2 1" /><circle cx="11" cy="7" r="4" fill="#dbe6ec" stroke="#444" /><line x1="14" y1="10" x2="18" y2="14" stroke="#444" strokeWidth="1.6" /></g>,
  <g>{bell}<path d="M13 1L18 6M18 1L13 6" stroke="#1a3ac8" strokeWidth="1" /><path d="M14 10L18 14L15 15Z" fill="#eee" stroke="#666" strokeWidth=".5" /></g>,
  <g>{bell}<path d="M3 3L5 5M17 3L15 5M2 8H4M18 8H16" stroke="#8aa" strokeWidth=".8" /></g>,
  <g><path d="M3 14L7 4L10 13" fill="none" stroke="#1a1a30" strokeWidth="1" /><line x1="8" x2="17" y1="8" y2="8" stroke="#d0a0a0" strokeWidth="1.4" /><circle cx="3" cy="14" r="1.2" fill="#1a3ac8" /><circle cx="7" cy="4" r="1.2" fill="#1a3ac8" />{txt(13, 15, "F", "#1a3ac8", 9)}</g>,
  <g><line x1="3" x2="14" y1="7" y2="7" stroke="#c8a0a0" strokeWidth="1.4" /><line x1="3" x2="14" y1="9" y2="9" stroke="#9aa8d8" />{txt(12, 15, "F", "#1a3ac8", 9)}</g>,
  <g><path d="M3 14L5 5H16L15 13Z" fill="#b3c6d2" stroke="#2a5ac8" strokeWidth="1" /><circle cx="4" cy="14" r="1.3" fill="#1a3ac8" /><circle cx="16" cy="4" r="1.3" fill="#1a3ac8" /></g>,
  <g><path d="M3 14L5 5H16L15 13Z" fill="#a69ea4" stroke="#e02020" strokeWidth="1.2" /><circle cx="4" cy="14" r="1.3" fill="#1a3ac8" /><circle cx="16" cy="4" r="1.3" fill="#1a3ac8" /></g>,
  <g><line x1="4" y1="15" x2="13" y2="6" stroke="#111" strokeWidth="2" /><path d="M10 3H17V10Z" fill="#111" /><circle cx="4" cy="15" r="1.3" fill="#445" /></g>,
  <g><rect x="3" y="3" width="14" height="13" rx="2" fill="#a9c0d2" stroke="#5a8ee0" />{txt(6.5, 13.5, "T", "#222", 11)}</g>,
  <g><ellipse cx="10" cy="9" rx="8" ry="7" fill="#a9c0d2" stroke="#4a8ee0" strokeWidth="1.1" />{txt(6.5, 13.5, "T", "#1a7a2a", 11)}</g>,
  <g><line x1="6" y1="13" x2="14" y2="5" stroke="#333" strokeWidth="1.3" /><circle cx="5" cy="14" r="2" fill="#aaa" stroke="#333" /><circle cx="15" cy="4" r="2" fill="#aaa" stroke="#333" /></g>,
  hnd("#8cf08c"), hnd("#32b832"), hnd("#0a7a0a"), hnd("#ee1010"),
  <g><path d="M3 12L13 3L17 7L7 16Z" fill="#b4c4cc" stroke="#5a6a74" /><path d="M6 10L8 12M9 7.5L11 9.5M12 5L14 7" stroke="#5a6a74" strokeWidth=".7" /></g>,
  <g><rect x="3" y="3" width="14" height="13" fill="#aab9bc" /><path d="M3 12L7 8L10 11L14 6L17 9" fill="none" stroke="#e8e8f8" /><path d="M3 5H17M3 9H17M3 14H17" stroke="#8cc08c" strokeDasharray="1 1" strokeWidth=".8" /></g>,
  ell("#f01414"), ell("#a07030"), ell("#1a8a2a"), ell("#18e818"),
  dg("#1e2a30"), dg("#2fa83a"), dg("#ee1010"),
  hl("#5a6a74"), hl("#f08f80"), hl("#18e81e"), hl("#147a1e"), hl("#ee1010"), hl("#6a9ef8"), hl("#1a1ab0"),
  <line x1="10" x2="10" y1="2" y2="16" stroke="#5a6a74" strokeWidth="2" />,
  <g><path d="M3 15L14 4M3 15H17" fill="none" stroke="#e06060" strokeWidth="1" /><path d="M9 8A8 8 0 0 1 11 15" fill="none" stroke="#1a3ac8" />{txt(13, 9, "α", "#1a3ac8", 7)}</g>,
  <g><circle cx="10" cy="10" r="6" fill="none" stroke="#e08a40" strokeWidth="1.2" /><path d="M8 10H12M10 8V12" stroke="#1a3ac8" /><circle cx="16" cy="4" r="1.2" fill="#1a3ac8" /></g>,
  <g><path d="M3 14L8 3M8 16L14 3M3 8L17 6M5 14L17 11" stroke="#4a6ae0" strokeWidth=".7" />{[[4,6],[9,5],[15,3],[5,11],[10,9],[16,10],[9,15],[13,14]].map((p, i) => <circle key={i} cx={p[0]} cy={p[1]} r="1.1" fill="#1a2ac8" />)}</g>,
  <g><path d="M3 3L10 16M16 2L4 14" stroke="#6a8ae0" strokeWidth=".7" /><circle cx="11" cy="5" r="1.2" fill="#1a2ac8" /><circle cx="4" cy="13" r="1.2" fill="#1a2ac8" /><circle cx="10" cy="15" r="1.2" fill="#1a2ac8" />{txt(13, 7, "b", "#1a2ac8", 7)}{txt(13, 16, "c", "#1a2ac8", 7)}</g>,
  <path d="M3 10L8 15L18 3L8 10L6 8Z" fill="#3a9a3e" stroke="#1a6a24" strokeWidth=".6" />,
  <path d="M3 9H6V17H3ZM7 9L10 2C12 2 12 5 11.5 7H17L15.5 16H7Z" fill="#4ab84a" stroke="#2a8a30" strokeWidth=".5" />,
  <path d="M5 2L10 6L15 2L18 5L13 9L18 13L15 16L10 12L5 16L2 13L7 9L2 5Z" fill="#ee1414" />,
];

export default function App() {
  return (
    <div className="flex h-[861px] w-[1600px] flex-col overflow-hidden bg-white font-['Liberation_Sans',Arial,sans-serif] text-[#1c2c36]">
      {/* top toolbar */}
      <div className="flex h-[18px] shrink-0 items-center border-b border-t border-b-[#63808f] border-t-[#46606f] bg-gradient-to-b from-[#c4dae4] to-[#a6c4d1] text-[8px] font-bold">
        <span className="ml-[3px] flex w-[17px] justify-center"><Logo /></span>
        <span className="ml-[2px] flex h-full w-[11px] flex-col items-center justify-center gap-[1px] border-l border-r border-[#86a1af]">
          <span className="h-[4px] w-[6px] bg-[#6c828e]" /><span className="h-[4px] w-[6px] bg-[#6c828e]" />
        </span>
        <span className="ml-[3px] flex w-[28px] items-center justify-between whitespace-nowrap">IBEX<ChevronDown size={8} strokeWidth={3} /></span>
        <span className="ml-[3px] mr-[5px] h-full border-l border-[#86a1af]" />
        <div className="flex gap-[4px]">
          <TopBtn t="12s" cls="w-[15px]" />
          <TopBtn t="144s" cls="w-[20px]" />
          <TopBtn t="1m" cls="w-[15px]" />
          <TopBtn t="12m" cls="w-[19px]" />
          <TopBtn t="56m" cls="w-[20px]" />
          <TopBtn t="1h" cls="w-[13px]" />
          <TopBtn t="4h" cls="w-[13px]" />
          <TopBtn t="D" cls="w-[10px]" />
          <TopBtn t="W" cls="w-[11px]" />
          <TopBtn t="M" cls="w-[10px]" />
          <TopBtn t="Q" cls="w-[10px]" on />
        </div>
        <span className="ml-[4px] h-full border-l border-[#86a1af]" />
        <span className="ml-[3px] flex w-[50px] items-center justify-between whitespace-nowrap">1 trimestre<ChevronDown size={8} strokeWidth={3} /></span>
        <span className="ml-[3px] mr-[3px] h-full border-l border-[#86a1af]" />
        <div className="flex gap-[4px]">
          <TopBtn t="5kU" cls="w-[18px]" />
          <TopBtn t="10kU" cls="w-[22px] " on />
          <TopBtn t="35kU" cls="w-[20px]" />
        </div>
        <span className="ml-[3px] h-full border-l border-[#86a1af]" />
        <span className="ml-[6px] flex w-[62px] items-center justify-between whitespace-nowrap">10 k unidades<ChevronDown size={8} strokeWidth={3} /></span>
        <span className="ml-[3px] h-full border-l border-[#86a1af]" />
        <svg className="ml-[3px]" width="16" height="15" viewBox="0 0 16 15">
          <path d="M1 6L4 3L8 7L12 3L15 6" fill="none" stroke="#d04030" strokeWidth="1" />
          <path d="M1 9L5 6L8 9L15 6" fill="none" stroke="#2fa03a" strokeWidth="1" />
          <rect x="2" y="11" width="12" height="3" fill="#3aaa3a" />
          <rect x="5" y="11" width="3" height="3" fill="#cc3a3a" />
        </svg>
        <span className="ml-[3px] w-[48px] whitespace-nowrap">Indicadores</span>
        <span className="h-full border-l border-[#86a1af]" />
        <span className="flex w-[11px] justify-center"><ChevronDown size={8} strokeWidth={3} /></span>
        <span className="h-full border-l border-[#86a1af]" />
        <span className="ml-[6px] flex h-[10px] w-[8px] items-center justify-center bg-[#e8eef0] text-[7px] text-[#556]">i</span>
        <span className="ml-[7px] h-[6px] w-[6px] rounded-full bg-[#7c8d96]" />
        <span className="ml-[5px] flex h-[12px] w-[32px] items-center justify-center rounded-[2px] bg-[#f04848] font-normal text-white">-0,21 %</span>
        <span className="ml-[3px] w-[46px] whitespace-nowrap">29 may 2026</span>
        <span className="ml-[5px] flex h-[12px] items-center whitespace-nowrap rounded-[5px] bg-[#c6dcb4] px-[2px] font-normal">España 35 Cash (1€)</span>
        <span className="flex-1" />
        <span className="flex h-full w-[17px] items-center justify-center border-l border-r border-[#86a1af]">
          <svg width="13" height="12" viewBox="0 0 13 12">
            <path d="M2 6A4.5 4.5 0 0 1 10 3" fill="none" stroke="#e02020" strokeWidth="2" />
            <path d="M11 6A4.5 4.5 0 0 1 3 9" fill="none" stroke="#20a030" strokeWidth="2" />
          </svg>
        </span>
        <span className="flex w-[37px] items-center justify-center gap-[3px] text-[#6f8a98]">
          <Minus size={9} strokeWidth={2} />
          <svg width="8" height="8" viewBox="0 0 8 8"><rect x="2.5" y=".5" width="5" height="5" fill="none" stroke="currentColor" /><rect x=".5" y="2.5" width="5" height="5" fill="#b0cbd6" stroke="currentColor" /></svg>
          <X size={9} strokeWidth={2} />
        </span>
      </div>

      <div className="flex h-[827px] shrink-0">
        {/* sidebar */}
        <aside className="flex w-[23px] shrink-0 flex-col border-r border-[#7f98a6] bg-[#a3bdc9]">
          <div className="flex h-[11px] items-center justify-center bg-[#bcd2dc] text-[#445]"><ChevronUp size={9} strokeWidth={2.5} /></div>
          <div className="flex flex-col">
            {sideIcons.map((ic, i) => (
              <div key={i} className="flex h-[18.375px] items-center justify-center">
                <span className={i === 0 ? "flex h-[17px] w-[17px] items-center justify-center rounded-[2px] border border-[#7d93a0] bg-[#8ea7b3]" : "flex"}>
                  <svg width={i === 0 ? 15 : 18} height={i === 0 ? 14 : 17} viewBox="0 0 20 18">{ic}</svg>
                </span>
              </div>
            ))}
          </div>
          <div className="flex-1" />
          <div className="flex h-[10px] items-center justify-center bg-[#bcd2dc] text-[#445]"><ChevronDown size={9} strokeWidth={2.5} /></div>
          <div className="flex h-[32px] items-center justify-center">
            <svg width="17" height="17" viewBox="0 0 17 17">
              <rect x="4" y="3" width="8" height="10" fill="#eef" stroke="#667" strokeWidth=".7" />
              <circle cx="4" cy="4" r="3" fill="#2a8a3a" />
              <circle cx="12" cy="12" r="3.5" fill="#556" />
              <circle cx="12" cy="12" r="1.5" fill="#eef" />
            </svg>
          </div>
          <div className="flex h-[13px] items-center justify-center gap-[2px]">
            <span className="h-[2px] w-[2px] bg-[#223]" /><span className="h-[2px] w-[2px] bg-[#223]" /><span className="h-[2px] w-[2px] bg-[#223]" />
          </div>
        </aside>

        {/* chart column */}
        <div className="flex w-[1577px] shrink-0 flex-col">
          <div className="relative flex h-[574px] shrink-0">
            <PanelSvgs top={18} h={574} plot={<MainPlot />} axis={<MainAxis />} />
            {/* legend strip */}
            <div className="absolute left-0 top-0 flex h-[14px] w-[635px] items-stretch border border-[#86a1af] bg-[#c5dae4] text-[8px] font-bold text-[#1a2a33]">
              <span className="flex w-[37px] items-center justify-center gap-[1px] border-r border-[#86a1af]">
                <span className="flex h-[9px] w-[9px] items-center justify-center bg-white text-[9px] leading-none text-[#e02020]">+</span>
                <span className="flex h-[9px] w-[9px] items-center justify-center bg-white text-[9px] leading-none text-[#20a030]">+</span>
                <Close />
              </span>
              <LegItem cls="w-[37px]"><Sw kind="no" />Precio</LegItem>
              <span className="flex w-[16px] flex-col items-center justify-center gap-[1px] border-r border-[#86a1af]">
                <span className="h-[1px] w-[8px] bg-[#444]" /><span className="h-[1px] w-[8px] bg-[#444]" /><span className="h-[1px] w-[8px] bg-[#444]" />
              </span>
              <LegItem cls="w-[52px]"><Sw kind="no" />Cierre (W)</LegItem>
              <LegItem cls="w-[116px]"><Sw kind="gr" />Tunel Domenec v4 (t t t t t)</LegItem>
              <LegItem cls="w-[94px]">
                <span className="flex h-[8px] w-[8px] shrink-0"><span className="w-1/4 bg-[#e02020]" /><span className="w-1/4 bg-[#e0c020]" /><span className="w-1/4 bg-[#20a030]" /><span className="w-1/4 bg-[#8030c0]" /></span>
                Control Total Doc v.6
              </LegItem>
              <LegItem cls="w-[120px]"><span className="h-[8px] w-[8px] shrink-0 bg-black" />Multi Avisos (3 f 3 1,5 70 f f)</LegItem>
              <LegItem cls="flex-1 border-r-0"><Sw kind="no" />DS_CotasHist (1 t t t 3 1 1 t f f f f f f f ...)</LegItem>
            </div>
            <div className="absolute left-[9px] top-[14px] text-[33px] font-bold leading-[37px] text-black">
              <div>IBEX, Q</div>
              <div>España 35 Cash (1€)</div>
            </div>
          </div>
          <div className="relative flex h-[60px] shrink-0">
            <PanelSvgs top={592} h={60} plot={<SysPlot />} axis={<SysAxis />} />
            <PanelLegend t="Sistema de trenes Doc v4 (f f)" kind="bk" cls="pr-[2px]" />
          </div>
          <div className="relative flex h-[75px] shrink-0">
            <PanelSvgs top={652} h={75} plot={<WillyPlot />} axis={<WillyAxis />} />
            <PanelLegend t="Willy Doc (t)" kind="gr" cls="pr-[2px]" />
          </div>
          <div className="relative flex h-[58px] shrink-0">
            <PanelSvgs top={727} h={58} plot={<AwePlot />} axis={<AweAxis />} />
            <PanelLegend t="Awesome Evolution Doc" kind="gr" cls="pr-[2px]" />
          </div>
          <div className="relative flex h-[47px] shrink-0">
            <PanelSvgs top={785} h={47} plot={<FuerzaPlot />} axis={<FuerzaAxis />} />
            <PanelLegend t="Barra Fuerza Fondo Mercado v4 (f)" kind="bk" cls="pr-[2px]" />
          </div>
          {/* time axis */}
          <div className="relative h-[13px] shrink-0 bg-white">
            <span className="absolute left-0 top-0 flex h-[12px] w-[13px] items-center justify-center bg-[#2a64b8] text-white"><ChevronsLeft size={9} strokeWidth={2.5} /></span>
            <svg className="block" width="1577" height="13" viewBox="23 832 1577 13">
              {Array.from({ length: 35 }, (_, i) => {
                const x = 51 + i * 43.46;
                return (
                  <g key={i}>
                    <line x1={x} x2={x} y1={832} y2={834} stroke="#8a9aa4" />
                    <text x={x} y={843} textAnchor="middle" fontSize={9} fontWeight={700} fill="#2a3a44" fontFamily={FF}>{1994 + i}</text>
                  </g>
                );
              })}
              <line x1={1566.5} x2={1566.5} y1={832} y2={833} stroke="#7f98a6" />
            </svg>
          </div>
        </div>
      </div>

      {/* bottom bar */}
      <div className="flex h-[16px] shrink-0 items-center overflow-hidden border-t border-[#7f98a6] bg-[#9ab8c6]">
        <span className="flex h-full w-[23px] shrink-0 items-center justify-center border-r border-[#7f98a6]">
          <svg width="16" height="14" viewBox="0 0 16 14">
            <path d="M1 13L4 2L7 9L11 1" fill="none" stroke="#e0a020" strokeWidth="1.2" />
            <path d="M7 13L14 3" stroke="#2a6a3a" strokeWidth="2" />
            <path d="M2 12L13 12" stroke="#444" />
          </svg>
        </span>
        <span className="ml-[3px] flex shrink-0 items-center gap-[4px]">
          <Share2 size={13} className="text-[#f4f8fa]" />
          <MessageSquareMore size={13} className="text-[#3a78d8]" />
          <FileText size={13} className="text-[#c03a30]" />
          <svg width="13" height="13" viewBox="0 0 13 13"><rect x="2" y="1" width="5" height="3" fill="#2fa03a" /><rect x="6" y="5" width="6" height="3" fill="#d04030" /><rect x="2" y="9" width="5" height="3" fill="#2fa03a" /><path d="M5 1V12" stroke="#555" /></svg>
          <svg width="14" height="13" viewBox="0 0 14 13"><rect x="1" y="1" width="9" height="8" fill="#e8f0f8" stroke="#3a78d8" /><rect x="4" y="4" width="9" height="8" fill="#fff" stroke="#3a78d8" /><path d="M5 10L8 7L10 9L12 6" fill="none" stroke="#d04030" /></svg>
          <ChevronsLeft size={10} className="text-[#4c6472]" />
        </span>
        <div className="ml-[2px] flex h-[13px] w-[1352px] shrink-0 items-center justify-between border border-[#86a1af] bg-[#a9c5d2]">
          <span className="flex h-full w-[11px] items-center justify-center bg-[#c5dae4]"><ChevronLeft size={8} strokeWidth={3} /></span>
          <span className="flex h-full w-[11px] items-center justify-center bg-[#c5dae4]"><ChevronRight size={8} strokeWidth={3} /></span>
        </div>
        <span className="ml-[6px] flex shrink-0 items-center gap-[5px]">
          <Undo2 size={13} className="text-[#7c9cc8]" />
          <Redo2 size={13} className="text-[#7c9cc8]" />
          <svg width="13" height="13" viewBox="0 0 13 13"><path d="M2 11L8 4L11 7L5 12Z" fill="#f0f0f0" stroke="#d03030" /><rect x="8" y="1" width="3" height="4" fill="#2fa03a" /></svg>
          <Search size={14} strokeWidth={2.6} className="text-[#243038]" />
          <ZoomOut size={13} strokeWidth={2.6} className="text-[#243038]" />
          <ZoomIn size={13} strokeWidth={2.6} className="text-[#243038]" />
          <svg width="8" height="13" viewBox="0 0 8 13"><path d="M1 3H8M1 5H8" stroke="#243038" /><path d="M4 7V11M2 9L4 12L6 9" fill="none" stroke="#2a64b8" /></svg>
        </span>
      </div>
    </div>
  );
}
